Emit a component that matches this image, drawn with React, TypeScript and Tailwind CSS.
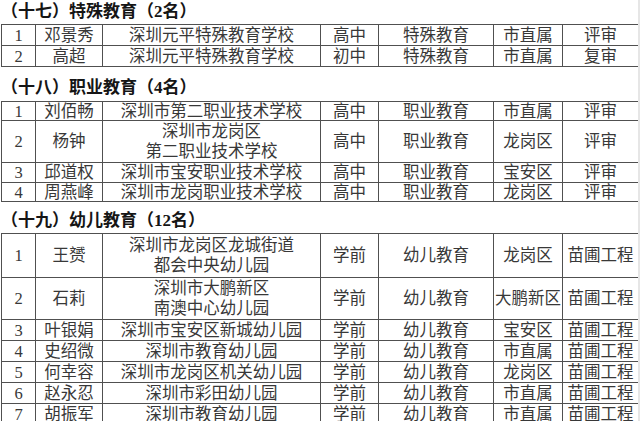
import React from "react";

type Row = { h: number; cells: (string | string[])[] };

const cols = "grid-cols-[34px_67px_218px_58px_115px_69px_76px]";

function Table({ rows }: { rows: Row[] }) {
  return (
    <div className={`grid ${cols} border-l border-t border-[#505050]`}>
      {rows.map((r, i) =>
        r.cells.map((c, j) => (
          <div
            key={`${i}-${j}`}
            style={{ height: r.h }}
            className="flex flex-col items-center justify-center pt-[1px] border-r border-b border-[#505050] text-[16.5px] leading-[20px] text-[#383838] whitespace-nowrap overflow-hidden"
          >
            {Array.isArray(c) ? c.map((l, k) => <span key={k}>{l}</span>) : <span>{c}</span>}
          </div>
        ))
      )}
    </div>
  );
}

export default function App() {
  const t1: Row[] = [
    { h: 21, cells: ["1", "邓景秀", "深圳元平特殊教育学校", "高中", "特殊教育", "市直属", "评审"] },
    { h: 21, cells: ["2", "高超", "深圳元平特殊教育学校", "初中", "特殊教育", "市直属", "复审"] },
  ];
  const t2: Row[] = [
    { h: 19, cells: ["1", "刘佰畅", "深圳市第二职业技术学校", "高中", "职业教育", "市直属", "评审"] },
    { h: 42, cells: ["2", "杨钟", ["深圳市龙岗区", "第二职业技术学校"], "高中", "职业教育", "龙岗区", "评审"] },
    { h: 20, cells: ["3", "邱道权", "深圳市宝安职业技术学校", "高中", "职业教育", "宝安区", "评审"] },
    { h: 19, cells: ["4", "周燕峰", "深圳市龙岗职业技术学校", "高中", "职业教育", "龙岗区", "评审"] },
  ];
  const t3: Row[] = [
    { h: 44, cells: ["1", "王赟", ["深圳市龙岗区龙城街道", "都会中央幼儿园"], "学前", "幼儿教育", "龙岗区", "苗圃工程"] },
    { h: 42, cells: ["2", "石莉", ["深圳市大鹏新区", "南澳中心幼儿园"], "学前", "幼儿教育", "大鹏新区", "苗圃工程"] },
    { h: 21, cells: ["3", "叶银娟", "深圳市宝安区新城幼儿园", "学前", "幼儿教育", "宝安区", "苗圃工程"] },
    { h: 21, cells: ["4", "史绍微", "深圳市教育幼儿园", "学前", "幼儿教育", "市直属", "苗圃工程"] },
    { h: 21, cells: ["5", "何幸容", "深圳市龙岗区机关幼儿园", "学前", "幼儿教育", "龙岗区", "苗圃工程"] },
    { h: 21, cells: ["6", "赵永忍", "深圳市彩田幼儿园", "学前", "幼儿教育", "市直属", "苗圃工程"] },
    { h: 21, cells: ["7", "胡振军", "深圳市教育幼儿园", "学前", "幼儿教育", "市直属", "苗圃工程"] },
  ];
  return (
    <div
      className="w-[640px] h-[421px] overflow-hidden bg-white flex"
      style={{ fontFamily: '"Liberation Serif", "Noto Sans CJK SC", serif' }}
    >
      <div className="w-[638px] pl-[1px]">
        <div className="h-[24px] flex items-end pb-[2px] text-[17px] leading-[20px] font-bold text-[#151515]">
          （十七）特殊教育（2名）
        </div>
        <Table rows={t1} />
        <div className="h-[34px] flex items-end pb-[3px] text-[17px] leading-[20px] font-bold text-[#151515]">
          （十八）职业教育（4名）
        </div>
        <Table rows={t2} />
        <div className="h-[31px] flex items-end pb-[2px] text-[17px] leading-[20px] font-bold text-[#151515]">
          （十九）幼儿教育（12名）
        </div>
        <Table rows={t3} />
      </div>
      <div className="w-[2px] bg-[#e6e6e6]" />
    </div>
  );
}
